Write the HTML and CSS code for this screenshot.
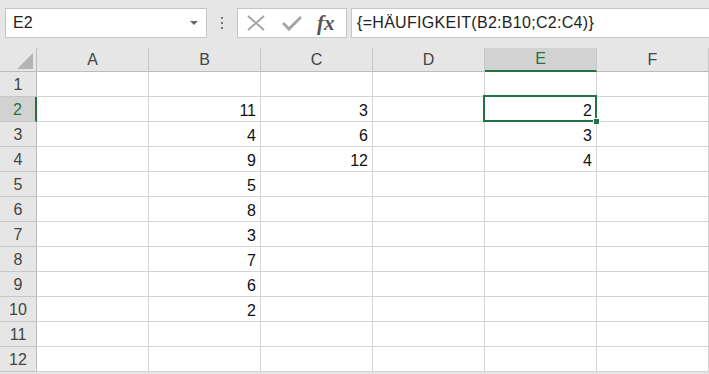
FILE: index.html
```html
<!DOCTYPE html>
<html lang="de">
<head>
    <meta charset="UTF-8">
    <title>HÄUFIGKEIT</title>
    <link rel="stylesheet" href="styles.css">
</head>
<body>
    <div class="formula-bar">
        <div class="name-box">
            <span>E2</span>
            <span class="caret"></span>
        </div>
        <div class="grip"><i></i><i></i><i></i></div>
        <div class="fx-buttons">
            <svg class="icon" width="20" height="16" viewBox="0 0 20 16">
                <path d="M2 1 L18 15 M18 1 L2 15" stroke="#a6a6a6" stroke-width="2" fill="none"/>
            </svg>
            <svg class="icon" width="20" height="16" viewBox="0 0 20 16">
                <path d="M1 8 L7 14 L19 2" stroke="#a6a6a6" stroke-width="3" fill="none"/>
            </svg>
            <span class="fx">fx</span>
        </div>
        <div class="formula-input">{=HÄUFIGKEIT(B2:B10;C2:C4)}</div>
    </div>

    <div class="sheet">
        <div class="corner"><span class="tri"></span></div>
        <div class="col-head">A</div>
        <div class="col-head">B</div>
        <div class="col-head">C</div>
        <div class="col-head">D</div>
        <div class="col-head active">E</div>
        <div class="col-head">F</div>

        <div class="row-head">1</div>
        <div class="cell"></div><div class="cell"></div><div class="cell"></div><div class="cell"></div><div class="cell"></div><div class="cell"></div>

        <div class="row-head active">2</div>
        <div class="cell"></div><div class="cell">11</div><div class="cell">3</div><div class="cell"></div><div class="cell selected">2</div><div class="cell"></div>

        <div class="row-head">3</div>
        <div class="cell"></div><div class="cell">4</div><div class="cell">6</div><div class="cell"></div><div class="cell">3</div><div class="cell"></div>

        <div class="row-head">4</div>
        <div class="cell"></div><div class="cell">9</div><div class="cell">12</div><div class="cell"></div><div class="cell">4</div><div class="cell"></div>

        <div class="row-head">5</div>
        <div class="cell"></div><div class="cell">5</div><div class="cell"></div><div class="cell"></div><div class="cell"></div><div class="cell"></div>

        <div class="row-head">6</div>
        <div class="cell"></div><div class="cell">8</div><div class="cell"></div><div class="cell"></div><div class="cell"></div><div class="cell"></div>

        <div class="row-head">7</div>
        <div class="cell"></div><div class="cell">3</div><div class="cell"></div><div class="cell"></div><div class="cell"></div><div class="cell"></div>

        <div class="row-head">8</div>
        <div class="cell"></div><div class="cell">7</div><div class="cell"></div><div class="cell"></div><div class="cell"></div><div class="cell"></div>

        <div class="row-head">9</div>
        <div class="cell"></div><div class="cell">6</div><div class="cell"></div><div class="cell"></div><div class="cell"></div><div class="cell"></div>

        <div class="row-head">10</div>
        <div class="cell"></div><div class="cell">2</div><div class="cell"></div><div class="cell"></div><div class="cell"></div><div class="cell"></div>

        <div class="row-head">11</div>
        <div class="cell"></div><div class="cell"></div><div class="cell"></div><div class="cell"></div><div class="cell"></div><div class="cell"></div>

        <div class="row-head">12</div>
        <div class="cell"></div><div class="cell"></div><div class="cell"></div><div class="cell"></div><div class="cell"></div><div class="cell"></div>
    </div>
</body>
</html>
```

FILE: styles.css
```css
body {
    margin: 0;
    background: #e6e6e6;
    font-family: "Liberation Sans", Arial, sans-serif;
    font-size: 16px;
    color: #222;
    overflow: hidden;
}

/* formula bar */
.formula-bar {
    display: flex;
    align-items: flex-start;
    height: 48px;
    padding: 8px 0 0 5px;
    box-sizing: border-box;
}
.name-box {
    width: 202px;
    height: 30px;
    box-sizing: border-box;
    background: #fff;
    border: 1px solid #c6c6c6;
    display: flex;
    align-items: center;
    justify-content: space-between;
    padding: 0 6px 0 7px;
}
.caret {
    width: 0;
    height: 0;
    border-left: 4px solid transparent;
    border-right: 4px solid transparent;
    border-top: 4px solid #666;
    margin-right: 2px;
}
.grip {
    width: 30px;
    height: 30px;
    display: flex;
    flex-direction: column;
    align-items: center;
    justify-content: center;
    gap: 3px;
}
.grip i {
    width: 2px;
    height: 2px;
    background: #777;
}
.fx-buttons {
    width: 110px;
    height: 30px;
    box-sizing: border-box;
    background: #fff;
    border: 1px solid #c6c6c6;
    display: flex;
    align-items: center;
    gap: 16px;
    padding-left: 8px;
}
.fx {
    font-family: "Liberation Serif", "Times New Roman", serif;
    font-style: italic;
    font-weight: bold;
    font-size: 21px;
    color: #555;
    margin-left: -1px;
}
.formula-input {
    flex: 1;
    height: 30px;
    margin-left: 4px;
    box-sizing: border-box;
    background: #fff;
    border: 1px solid #c6c6c6;
    border-right: none;
    padding: 0 5px;
    display: flex;
    align-items: center;
    white-space: nowrap;
    letter-spacing: 0.3px;
}

/* sheet grid */
.sheet {
    display: grid;
    grid-template-columns: 37px repeat(5, 112px) 1fr;
    grid-template-rows: 24px repeat(12, 25px);
    background: #fff;
}
.corner {
    background: #e6e6e6;
    border-right: 1px solid #bcbcbc;
    border-bottom: 1px solid #bcbcbc;
    display: flex;
    align-items: flex-end;
    justify-content: flex-end;
    padding: 0 3px 2px 0;
}
.tri {
    width: 0;
    height: 0;
    border-left: 16px solid transparent;
    border-bottom: 16px solid #b4b4b4;
}
.col-head {
    background: #e6e6e6;
    border-right: 1px solid #c6c6c6;
    border-bottom: 1px solid #bcbcbc;
    color: #444;
    display: flex;
    align-items: center;
    justify-content: center;
}
.col-head.active {
    background: #d2d2d2;
    color: #217346;
    border-bottom: 2px solid #217346;
}
.row-head {
    background: #e6e6e6;
    border-right: 1px solid #bcbcbc;
    border-bottom: 1px solid #c6c6c6;
    color: #444;
    display: flex;
    align-items: center;
    justify-content: center;
    padding-top: 2px;
}
.row-head.active {
    background: #d2d2d2;
    color: #217346;
    border-right: 2px solid #217346;
}
.cell {
    border-right: 1px solid #d4d4d4;
    border-bottom: 1px solid #d4d4d4;
    display: flex;
    align-items: flex-end;
    justify-content: flex-end;
    padding: 0 4px 2px 0;
    line-height: 16px;
    color: #111;
}
.cell.selected {
    position: relative;
}
.cell.selected::before {
    content: "";
    position: absolute;
    left: -2px;
    top: -2px;
    right: -1px;
    bottom: -1px;
    border: 2px solid #217346;
}
.cell.selected::after {
    content: "";
    position: absolute;
    right: -4px;
    bottom: -4px;
    width: 5px;
    height: 5px;
    background: #217346;
    border: 1px solid #fff;
}
```
